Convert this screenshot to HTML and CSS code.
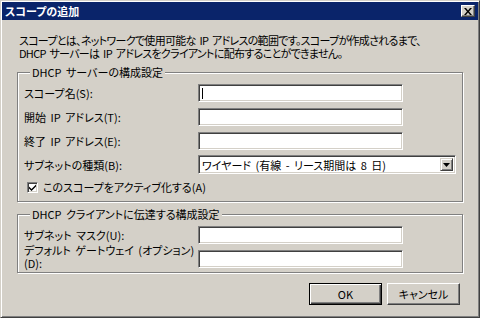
FILE: index.html
```html
<!DOCTYPE html>
<html lang="ja">
<head>
    <meta charset="UTF-8">
    <meta name="viewport" content="width=device-width, initial-scale=1.0">
    <title>スコープの追加</title>
    <link rel="stylesheet" href="styles.css">
</head>
<body>
    <div class="window">
        <div class="titlebar">
            <span class="title">スコープの追加</span>
            <span class="close">
                <svg width="8" height="7" viewBox="0 0 8 7"><path d="M0 0h2l2 2.5L6 0h2L5 3.5 8 7H6L4 4.5 2 7H0l3-3.5z" fill="#000"/></svg>
            </span>
        </div>
        <div class="content">
            <p class="intro">スコープとは、ネットワークで使用可能な IP アドレスの範囲です。スコープが作成されるまで、<br>DHCP サーバーは IP アドレスをクライアントに配布することができません。</p>

            <fieldset class="group server">
                <legend>DHCP サーバーの構成設定</legend>
                <div class="row">
                    <span class="label">スコープ名(S):</span>
                    <div class="textbox"><span class="caret"></span></div>
                </div>
                <div class="row">
                    <span class="label">開始 IP アドレス(T):</span>
                    <div class="textbox"></div>
                </div>
                <div class="row">
                    <span class="label">終了 IP アドレス(E):</span>
                    <div class="textbox"></div>
                </div>
                <div class="row row-select">
                    <span class="label">サブネットの種類(B):</span>
                    <div class="select">
                        <span class="select-text">ワイヤード (有線 - リース期間は 8 日)</span>
                        <span class="select-arrow">
                            <svg width="7" height="4" viewBox="0 0 7 4"><path d="M0 0h7L3.5 4z" fill="#000"/></svg>
                        </span>
                    </div>
                </div>
                <div class="checkbox">
                    <span class="box">
                        <svg width="7" height="7" viewBox="0 0 7 7"><path d="M0 2.5l2.5 2.5L7 0.5V2.5L2.5 7 0 4.5z" fill="#000"/></svg>
                    </span>
                    <span>このスコープをアクティブ化する(A)</span>
                </div>
            </fieldset>

            <fieldset class="group client">
                <legend>DHCP クライアントに伝達する構成設定</legend>
                <div class="row">
                    <span class="label">サブネット マスク(U):</span>
                    <div class="textbox"></div>
                </div>
                <div class="row row-tall">
                    <span class="label">デフォルト ゲートウェイ (オプション)<br>(D):</span>
                    <div class="textbox"></div>
                </div>
            </fieldset>

            <div class="buttons">
                <span class="button default">OK</span>
                <span class="button">キャンセル</span>
            </div>
        </div>
    </div>
</body>
</html>
```

FILE: styles.css
```css
/* Body styles */
body {
    margin: 0;
    background: #d4d0c8;
    font-family: "Noto Sans CJK JP", "Noto Sans", sans-serif;
    font-size: 11px;
    font-feature-settings: "palt";
    color: #000;
}

/* Window frame */
.window {
    width: 480px;
    height: 318px;
    box-sizing: border-box;
    padding: 1px;
    border: 1px solid;
    border-color: #d4d0c8 #404040 #404040 #d4d0c8;
    box-shadow: inset 1px 1px #ffffff, inset -1px -1px #808080;
    display: flex;
    flex-direction: column;
}

.titlebar {
    height: 18px;
    background: #0a246a;
    display: flex;
    align-items: center;
    justify-content: space-between;
    padding: 0 3px;
}

.title {
    color: #ffffff;
    font-weight: bold;
    font-size: 11px;
    line-height: 12px;
}

.close {
    width: 12px;
    height: 10px;
    background: #d4d0c8;
    border: 1px solid;
    border-color: #ffffff #404040 #404040 #ffffff;
    box-shadow: inset -1px -1px #808080;
    display: flex;
    align-items: center;
    justify-content: center;
}

/* Dialog content */
.content {
    padding: 14px 15px 0 15px;
    display: flex;
    flex-direction: column;
}

.intro {
    margin: 0 0 6px 2px;
    line-height: 13px;
    letter-spacing: -0.7px;
    word-spacing: 2px;
}

/* Group boxes */
.group {
    margin: 0;
    padding: 6px 6px 8px 6px;
    border: 1px solid #808080;
    box-shadow: inset 1px 1px #ffffff, 1px 1px #ffffff;
    display: flex;
    flex-direction: column;
    gap: 6px;
    width: 446px;
    box-sizing: border-box;
}

.group legend {
    margin-left: 6px;
    padding: 0 2px;
    line-height: 12px;
    background: #d4d0c8;
    word-spacing: 2px;
}

.group.client {
    margin-top: 6px;
    padding-bottom: 2px;
}

.row {
    display: flex;
    align-items: center;
}

.label {
    width: 174px;
    line-height: 12px;
    word-spacing: 2px;
}

.row-select {
    margin-top: -1px;
}

.row-tall {
    margin-top: -6px;
    align-items: flex-start;
}

.row-tall .label {
    line-height: 13px;
}

.row-tall .textbox {
    margin-top: 6px;
}

/* Text boxes */
.textbox {
    width: 205px;
    height: 18px;
    box-sizing: border-box;
    background: #ffffff;
    border: 1px solid;
    border-color: #808080 #ffffff #ffffff #808080;
    box-shadow: inset 1px 1px #404040, inset -1px -1px #d4d0c8;
    display: flex;
    align-items: center;
    padding-left: 3px;
}

.caret {
    width: 1px;
    height: 11px;
    background: #000;
}

.select {
    width: 258px;
    height: 19px;
    box-sizing: border-box;
    background: #ffffff;
    border: 1px solid;
    border-color: #808080 #ffffff #ffffff #808080;
    box-shadow: inset 1px 1px #404040, inset -1px -1px #d4d0c8;
    display: flex;
    align-items: center;
    justify-content: space-between;
    padding: 2px 2px 2px 3px;
}

.select-text {
    line-height: 12px;
    word-spacing: 2px;
}

.select-arrow {
    width: 13px;
    height: 13px;
    box-sizing: border-box;
    background: #d4d0c8;
    border: 1px solid;
    border-color: #d4d0c8 #404040 #404040 #d4d0c8;
    box-shadow: inset 1px 1px #ffffff, inset -1px -1px #808080;
    display: flex;
    align-items: center;
    justify-content: center;
}

/* Checkbox */
.checkbox {
    display: flex;
    align-items: center;
    gap: 5px;
    margin-top: 1px;
    padding-left: 3px;
    line-height: 12px;
}

.checkbox .box {
    width: 11px;
    height: 11px;
    box-sizing: border-box;
    background: #ffffff;
    border: 1px solid;
    border-color: #808080 #ffffff #ffffff #808080;
    box-shadow: inset 1px 1px #404040, inset -1px -1px #d4d0c8;
    display: flex;
    align-items: center;
    justify-content: center;
}

/* Buttons */
.buttons {
    display: flex;
    justify-content: flex-end;
    gap: 5px;
    margin-top: 10px;
    padding-right: 3px;
}

.button {
    width: 73px;
    height: 22px;
    box-sizing: border-box;
    border: 1px solid;
    border-color: #ffffff #404040 #404040 #ffffff;
    box-shadow: inset -1px -1px #808080;
    display: flex;
    align-items: center;
    justify-content: center;
    line-height: 12px;
}

.button.default {
    border: 1px solid #000;
    box-shadow: inset 1px 1px #ffffff, inset -1px -1px #404040, inset -2px -2px #808080;
}
```
